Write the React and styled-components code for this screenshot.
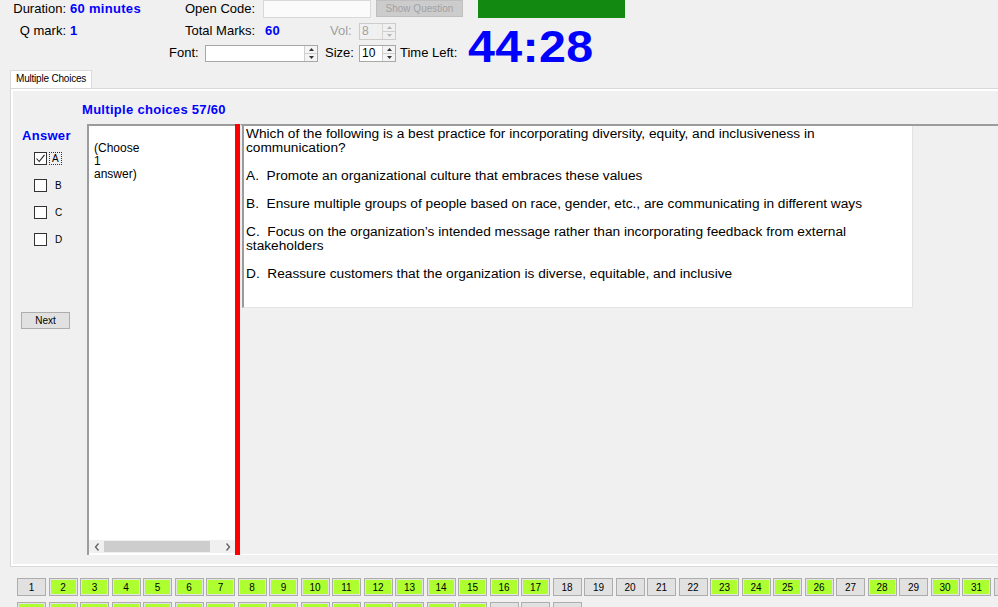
import React from "react";
import styled, { createGlobalStyle } from "styled-components";

const Global = createGlobalStyle`
  html, body { margin: 0; padding: 0; }
  body {
    background: #f0f0f0;
    font-family: "Liberation Sans", Arial, sans-serif;
    color: #000;
    overflow: hidden;
  }
  #root { width: 998px; height: 607px; overflow: hidden; }
`;

const Page = styled.div`
  width: 998px;
  height: 607px;
  overflow: hidden;
  display: flex;
  flex-direction: column;
`;

/* ---------- header ---------- */
const Header = styled.div`
  height: 70px;
  display: flex;
  align-items: flex-start;
  flex-shrink: 0;
`;

const LeftHeader = styled.div`
  width: 468px;
  display: flex;
  flex-direction: column;
`;

const HRow = styled.div`
  height: ${(p) => p.$h}px;
  display: flex;
  align-items: ${(p) => (p.$top ? "flex-start" : "center")};
  font-size: 13px;
`;

const Cell = styled.div`
  width: ${(p) => p.$w}px;
  margin-left: ${(p) => p.$ml || 0}px;
  flex-shrink: 0;
  text-align: ${(p) => p.$align || "left"};
  white-space: nowrap;
  color: ${(p) => (p.$blue ? "#0000ff" : p.$gray ? "#a0a0a0" : "#000")};
  font-weight: ${(p) => (p.$blue ? 700 : 400)};
  letter-spacing: ${(p) => (p.$blue ? "0.3px" : "0")};
  line-height: 16px;
  ${(p) => (p.$top ? "margin-top: 1px;" : "")}
`;

const TextBox = styled.div`
  width: ${(p) => p.$w}px;
  height: ${(p) => p.$h}px;
  box-sizing: border-box;
  background: #fbfbfb;
  border: 1px solid #d9d9d9;
  flex-shrink: 0;
`;

const DisabledButton = styled.div`
  width: 87px;
  height: 17px;
  margin-left: 5px;
  box-sizing: border-box;
  background: #cccccc;
  border: 1px solid #bfbfbf;
  color: #a2a2a2;
  font-size: 10px;
  display: flex;
  align-items: center;
  justify-content: center;
  flex-shrink: 0;
`;

const Spinner = styled.div`
  width: ${(p) => p.$w}px;
  height: 17px;
  box-sizing: border-box;
  border: 1px solid ${(p) => (p.$disabled ? "#cccccc" : "#a8a8a8")};
  background: ${(p) => (p.$disabled ? "#f0f0f0" : "#fff")};
  display: flex;
  flex-shrink: 0;
`;

const SpinValue = styled.div`
  flex: 1;
  font-size: 12px;
  line-height: 15px;
  padding-left: 2px;
  color: ${(p) => (p.$disabled ? "#a0a0a0" : "#000")};
`;

const SpinButtons = styled.div`
  width: 12px;
  display: flex;
  flex-direction: column;
  border-left: 1px solid ${(p) => (p.$disabled ? "#d5d5d5" : "#cfcfcf")};
  background: ${(p) => (p.$disabled ? "#f0f0f0" : "#f4f4f4")};
`;

const SpinHalf = styled.div`
  flex: 1;
  display: flex;
  align-items: center;
  justify-content: center;
  & + & { border-top: 1px solid ${(p) => (p.$disabled ? "#d5d5d5" : "#cfcfcf")}; }
`;

const Arrow = ({ up, color }) => (
  <svg width="5" height="3" viewBox="0 0 5 3">
    <polygon points={up ? "0,3 5,3 2.5,0" : "0,0 5,0 2.5,3"} fill={color} />
  </svg>
);

const SpinBox = ({ w, value, disabled }) => (
  <Spinner $w={w} $disabled={disabled}>
    <SpinValue $disabled={disabled}>{value}</SpinValue>
    <SpinButtons $disabled={disabled}>
      <SpinHalf $disabled={disabled}>
        <Arrow up color={disabled ? "#b5b5b5" : "#333"} />
      </SpinHalf>
      <SpinHalf $disabled={disabled}>
        <Arrow color={disabled ? "#b5b5b5" : "#333"} />
      </SpinHalf>
    </SpinButtons>
  </Spinner>
);

const TimeCol = styled.div`
  display: flex;
  flex-direction: column;
`;

const GreenBox = styled.div`
  width: 147px;
  height: 18px;
  margin-left: 10px;
  background: #128a12;
`;

const TimeText = styled.div`
  margin-top: 7px;
  font-size: 44px;
  line-height: 44px;
  font-weight: 700;
  color: #0000ff;
  transform: scaleX(1.1);
  transform-origin: left center;
  letter-spacing: 0.3px;
  white-space: nowrap;
`;

/* ---------- tabs / panel ---------- */
const TabStrip = styled.div`
  display: flex;
  padding-left: 10px;
  flex-shrink: 0;
`;

const Tab = styled.div`
  height: 18px;
  box-sizing: border-box;
  padding: 0 5px;
  border: 1px solid #d9d9d9;
  border-bottom: none;
  background: #ffffff;
  font-size: 10px;
  line-height: 16px;
  letter-spacing: -0.2px;
`;

const Panel = styled.div`
  margin-left: 10px;
  width: 1000px;
  height: 479px;
  box-sizing: border-box;
  border: 1px solid #d9d9d9;
  box-shadow: inset 2px 2px 0 #ffffff, inset -2px -2px 0 #ffffff;
  display: flex;
  flex-direction: column;
  flex-shrink: 0;
`;

const PanelTitle = styled.div`
  margin-top: 13px;
  padding-left: 71px;
  font-size: 13px;
  line-height: 16px;
  font-weight: 700;
  color: #0000ff;
  letter-spacing: 0.3px;
`;

const Body = styled.div`
  margin-top: 6px;
  height: 431px;
  display: flex;
`;

const AnswerCol = styled.div`
  width: 76px;
  display: flex;
  flex-direction: column;
  flex-shrink: 0;
`;

const AnswerLabel = styled.div`
  margin-top: 4px;
  padding-left: 11px;
  font-size: 13px;
  line-height: 16px;
  font-weight: 700;
  color: #0000ff;
  letter-spacing: 0.3px;
`;

const CheckRow = styled.div`
  height: 27px;
  display: flex;
  align-items: center;
  padding-left: 23px;
  margin-top: ${(p) => (p.$first ? 1 : 0)}px;
`;

const Box = styled.div`
  width: 13px;
  height: 13px;
  box-sizing: border-box;
  border: 1px solid #333333;
  background: #ffffff;
  display: flex;
  align-items: center;
  justify-content: center;
`;

const CheckLabel = styled.span`
  margin-left: ${(p) => (p.$focus ? 2 : 5)}px;
  font-size: 10px;
  line-height: 11px;
  padding: 0 2px;
  border: 1px dotted ${(p) => (p.$focus ? "#333" : "transparent")};
`;

const NextButton = styled.div`
  margin-top: 59px;
  margin-left: 10px;
  width: 49px;
  height: 17px;
  box-sizing: border-box;
  background: #e1e1e1;
  border: 1px solid #adadad;
  font-size: 10px;
  display: flex;
  align-items: center;
  justify-content: center;
`;

const ChooseBox = styled.div`
  width: 148px;
  height: 431px;
  box-sizing: border-box;
  background: #ffffff;
  border-left: 2px solid #9c9c9c;
  border-top: 2px solid #9c9c9c;
  display: flex;
  flex-direction: column;
  flex-shrink: 0;
`;

const ChooseText = styled.div`
  flex: 1;
  padding: 16px 0 0 5px;
  font-size: 12px;
  line-height: 13px;
  white-space: pre;
`;

const HScroll = styled.div`
  height: 13px;
  margin-bottom: 2px;
  background: #f0f0f0;
  display: flex;
  align-items: center;
`;

const ScrollArrow = styled.div`
  width: 15px;
  height: 13px;
  display: flex;
  align-items: center;
  justify-content: center;
`;

const Thumb = styled.div`
  width: 106px;
  height: 11px;
  background: #cdcdcd;
`;

const ScrollTrack = styled.div`
  flex: 1;
`;

const Chevron = ({ left }) => (
  <svg width="6" height="8" viewBox="0 0 6 8">
    <polyline
      points={left ? "4.5,0.5 1.5,4 4.5,7.5" : "1.5,0.5 4.5,4 1.5,7.5"}
      fill="none"
      stroke="#606060"
      strokeWidth="1.3"
    />
  </svg>
);

const RedBar = styled.div`
  width: 5px;
  height: 431px;
  background: #ff0000;
  flex-shrink: 0;
`;

const RightArea = styled.div`
  flex: 1;
  height: 431px;
  box-sizing: border-box;
  border-top: 2px solid #9c9c9c;
  border-left: 2px solid #f0f0f0;
  border-bottom: 1px solid #ffffff;
`;

const QuestionBox = styled.div`
  width: 671px;
  height: 182px;
  box-sizing: border-box;
  background: #ffffff;
  border-left: 2px solid #9c9c9c;
  border-right: 1px solid #e3e3e3;
  border-bottom: 1px solid #e3e3e3;
  padding: 1px 0 0 2px;
  font-size: 13.7px;
  line-height: 14px;
  white-space: pre;
`;

/* ---------- navigation buttons ---------- */
const Nav = styled.div`
  margin-top: 11px;
  padding-left: 17px;
  display: flex;
  flex-direction: column;
  gap: 6px;
`;

const NavRow = styled.div`
  display: flex;
  gap: 2.5px;
`;

const NavButton = styled.div`
  width: 29px;
  height: 18px;
  box-sizing: border-box;
  flex-shrink: 0;
  border: 1px solid #adadad;
  background: ${(p) => (p.$done ? "#adff2f" : "#e1e1e1")};
  box-shadow: ${(p) => (p.$done ? "inset 0 0 0 1px #e4e4e4" : "none")};
  font-size: 10px;
  display: flex;
  align-items: center;
  justify-content: center;
`;

const row1Done = new Set([
  2, 3, 4, 5, 6, 7, 8, 9, 10, 11, 12, 13, 14, 15, 16, 17, 23, 24, 25, 26, 28, 30, 31,
]);
const row1 = Array.from({ length: 42 }, (_, i) => i + 1);
const row2 = Array.from({ length: 18 }, (_, i) => i + 43);

const question = [
  "Which of the following is a best practice for incorporating diversity, equity, and inclusiveness in",
  "communication?",
  "",
  "A.  Promote an organizational culture that embraces these values",
  "",
  "B.  Ensure multiple groups of people based on race, gender, etc., are communicating in different ways",
  "",
  "C.  Focus on the organization\u2019s intended message rather than incorporating feedback from external",
  "stakeholders",
  "",
  "D.  Reassure customers that the organization is diverse, equitable, and inclusive",
].join("\n");

export default function App() {
  return (
    <Page>
      <Global />
      <Header>
        <LeftHeader>
          <HRow $h={20} $top>
            <Cell $w={66} $align="right" $top>Duration:</Cell>
            <Cell $w={115} $ml={4} $blue $top>60 minutes</Cell>
            <Cell $w={78} $top>Open Code:</Cell>
            <TextBox $w={108} $h={18} />
            <DisabledButton>Show Question</DisabledButton>
          </HRow>
          <HRow $h={22}>
            <Cell $w={66} $align="right">Q mark:</Cell>
            <Cell $w={115} $ml={4} $blue>1</Cell>
            <Cell $w={80}>Total Marks:</Cell>
            <Cell $w={65} $blue>60</Cell>
            <Cell $w={29} $gray>Vol:</Cell>
            <SpinBox w={37} value="8" disabled />
          </HRow>
          <HRow $h={22}>
            <Cell $w={169} />
            <Cell $w={36}>Font:</Cell>
            <SpinBox w={113} value="" />
            <Cell $w={34} $ml={7}>Size:</Cell>
            <SpinBox w={37} value="10" />
            <Cell $w={60} $ml={4}>Time Left:</Cell>
          </HRow>
        </LeftHeader>
        <TimeCol>
          <GreenBox />
          <TimeText>44:28</TimeText>
        </TimeCol>
      </Header>

      <TabStrip>
        <Tab>Multiple Choices</Tab>
      </TabStrip>
      <Panel>
        <PanelTitle>Multiple choices 57/60</PanelTitle>
        <Body>
          <AnswerCol>
            <AnswerLabel>Answer</AnswerLabel>
            {["A", "B", "C", "D"].map((l, i) => (
              <CheckRow key={l} $first={i === 0}>
                <Box>
                  {i === 0 && (
                    <svg width="11" height="11" viewBox="0 0 11 11">
                      <polyline
                        points="1.5,5.5 4.2,8.5 9.5,1.8"
                        fill="none"
                        stroke="#222"
                        strokeWidth="1.1"
                      />
                    </svg>
                  )}
                </Box>
                <CheckLabel $focus={i === 0}>{l}</CheckLabel>
              </CheckRow>
            ))}
            <NextButton>Next</NextButton>
          </AnswerCol>
          <ChooseBox>
            <ChooseText>{"(Choose\n1\nanswer)"}</ChooseText>
            <HScroll>
              <ScrollArrow><Chevron left /></ScrollArrow>
              <Thumb />
              <ScrollTrack />
              <ScrollArrow><Chevron /></ScrollArrow>
            </HScroll>
          </ChooseBox>
          <RedBar />
          <RightArea>
            <QuestionBox>{question}</QuestionBox>
          </RightArea>
        </Body>
      </Panel>

      <Nav>
        <NavRow>
          {row1.map((n) => (
            <NavButton key={n} $done={row1Done.has(n)}>{n}</NavButton>
          ))}
        </NavRow>
        <NavRow>
          {row2.map((n) => (
            <NavButton key={n} $done={n <= 57}>{n}</NavButton>
          ))}
        </NavRow>
      </Nav>
    </Page>
  );
}
